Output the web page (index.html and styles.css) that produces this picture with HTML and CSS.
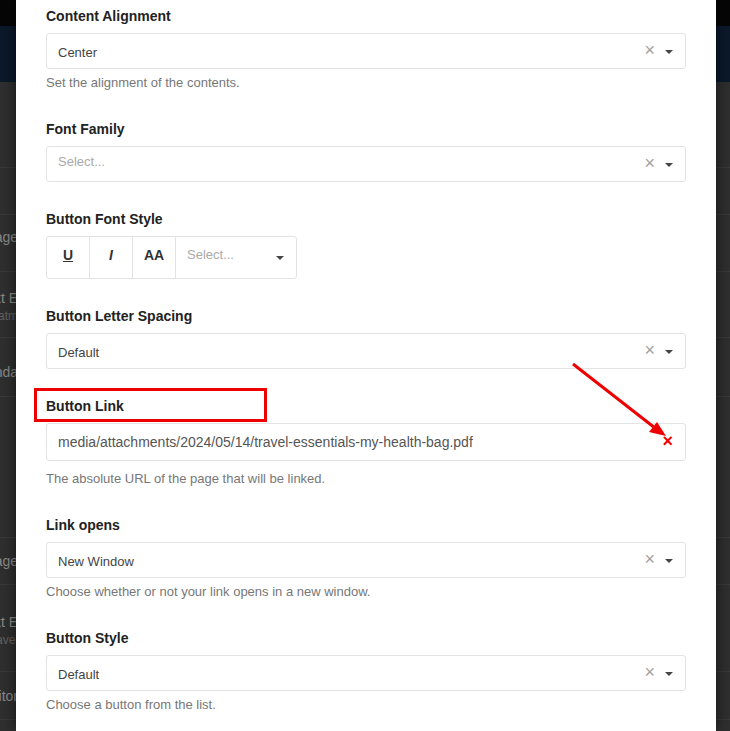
FILE: index.html
```html
<!DOCTYPE html>
<html lang="en">
<head>
  <meta charset="UTF-8" />
  <meta name="viewport" content="width=device-width, initial-scale=1.0"/>
  <title>Button Settings</title>
  <link rel="stylesheet" href="styles.css">
</head>
<body>
  <div class="page">
    <div class="topbar"></div>
    <div class="navbar"></div>
    <div class="rows">
      <div class="row r1"></div>
      <div class="row r2"></div>
      <div class="row r3"><span class="frag">Image</span></div>
      <div class="row r4"><span class="frag">Text E</span><span class="frag sub">Treatm</span></div>
      <div class="row r5"><span class="frag">Agenda</span></div>
      <div class="row r6"></div>
      <div class="row r7"><span class="frag">Image</span></div>
      <div class="row r8"><span class="frag">Text E</span><span class="frag sub">Travel</span></div>
      <div class="row r9"><span class="frag">Editor</span></div>
      <div class="row r10"></div>
    </div>
  </div>

  <div class="modal">
    <div class="field">
      <label>Content Alignment</label>
      <div class="select">
        <span class="value">Center</span>
        <span class="clear">&times;</span>
        <span class="caret"></span>
      </div>
      <p class="help">Set the alignment of the contents.</p>
    </div>

    <div class="field">
      <label>Font Family</label>
      <div class="select">
        <span class="value placeholder">Select...</span>
        <span class="clear">&times;</span>
        <span class="caret"></span>
      </div>
    </div>

    <div class="field">
      <label>Button Font Style</label>
      <div class="btn-group">
        <span class="style-btn under">U</span>
        <span class="style-btn ital">I</span>
        <span class="style-btn">AA</span>
        <div class="group-select">
          <span class="value placeholder">Select...</span>
          <span class="caret"></span>
        </div>
      </div>
    </div>

    <div class="field">
      <label>Button Letter Spacing</label>
      <div class="select">
        <span class="value">Default</span>
        <span class="clear">&times;</span>
        <span class="caret"></span>
      </div>
    </div>

    <div class="field link-field">
      <label>Button Link</label>
      <div class="highlight"></div>
      <div class="text-input">
        <span class="value">media/attachments/2024/05/14/travel-essentials-my-health-bag.pdf</span>
        <span class="clear red">&times;</span>
      </div>
      <p class="help">The absolute URL of the page that will be linked.</p>
      <svg class="arrow" width="110" height="90" viewBox="0 0 110 90">
        <line x1="4" y1="4" x2="86" y2="68" stroke="#ee0000" stroke-width="3"/>
        <polygon points="97,76 80,72 88,62" fill="#ee0000"/>
      </svg>
    </div>

    <div class="field">
      <label>Link opens</label>
      <div class="select">
        <span class="value">New Window</span>
        <span class="clear">&times;</span>
        <span class="caret"></span>
      </div>
      <p class="help">Choose whether or not your link opens in a new window.</p>
    </div>

    <div class="field">
      <label>Button Style</label>
      <div class="select">
        <span class="value">Default</span>
        <span class="clear">&times;</span>
        <span class="caret"></span>
      </div>
      <p class="help">Choose a button from the list.</p>
    </div>
  </div>
</body>
</html>
```

FILE: styles.css
```css
html, body {
  margin: 0;
  height: 100%;
  overflow: hidden;
}
body {
  background-color: #2f2f2f;
  font-family: "Liberation Sans", Arial, sans-serif;
  position: relative;
}

/* dimmed page behind the modal */
.topbar {
  height: 26px;
  background: #060606;
}
.navbar {
  height: 56px;
  background: #0b192b;
}
.rows {
  background: #2f2f2f;
}
.row {
  border-bottom: 1px solid #3a3a3a;
  box-sizing: border-box;
  display: flex;
  flex-direction: column;
  align-items: flex-start;
  justify-content: center;
  overflow: hidden;
  white-space: nowrap;
}
.frag {
  display: block;
  width: 18px;
  direction: rtl;
  text-align: left;
  overflow: hidden;
  font-size: 14px;
  color: #8a8a8a;
  line-height: 18px;
}
.frag.sub {
  font-size: 12px;
  color: #626262;
}
.r1 { height: 86px; }
.r2 { height: 47px; }
.r3 { height: 57px; padding-bottom: 12px; }
.r4 { height: 66px; padding-top: 4px; }
.r5 { height: 59px; padding-top: 10px; }
.r6 { height: 141px; }
.r7 { height: 47px; }
.r8 { height: 87px; padding-top: 6px; }
.r9 { height: 48px; }
.r10 { height: 60px; }

/* modal */
.modal {
  position: absolute;
  top: 0;
  left: 16px;
  width: 700px;
  bottom: 0;
  box-sizing: border-box;
  background: #fff;
  padding: 6px 30px 0;
  box-shadow: 0 0 14px rgba(0, 0, 0, 0.6);
}
.field {
  margin-bottom: 27px;
  position: relative;
}
.field label {
  display: block;
  font-size: 14px;
  font-weight: bold;
  color: #222;
  line-height: 20px;
  margin-bottom: 7px;
}
.select, .text-input {
  display: flex;
  align-items: center;
  height: 36px;
  box-sizing: border-box;
  border: 1px solid #e3e3e3;
  border-radius: 3px;
  padding: 2px 12px 0 11px;
}
.text-input {
  height: 38px;
  padding-top: 0;
}
.value {
  flex: 1;
  font-size: 13px;
  color: #444;
}
.text-input .value {
  font-size: 14px;
  color: #555;
}
.placeholder {
  color: #aaa;
  padding-bottom: 7px;
}
.clear {
  font-size: 18px;
  line-height: 18px;
  color: #a0a0a0;
  margin-right: 10px;
  padding-bottom: 5px;
}
.clear.red {
  color: #ee0000;
  font-weight: bold;
  margin-right: 0;
  padding-bottom: 3px;
}
.caret {
  width: 0;
  height: 0;
  border-left: 4px solid transparent;
  border-right: 4px solid transparent;
  border-top: 4px solid #444;
}
.help {
  margin: 5px 0 0;
  font-size: 13px;
  line-height: 18px;
  color: #777;
}
.link-field .help {
  margin-top: 9px;
}

/* font style group */
.btn-group {
  display: flex;
  width: 251px;
  height: 43px;
  border: 1px solid #e3e3e3;
  border-radius: 3px;
  box-sizing: border-box;
}
.style-btn {
  width: 43px;
  box-sizing: border-box;
  border-right: 1px solid #e3e3e3;
  display: flex;
  align-items: center;
  justify-content: center;
  padding-bottom: 5px;
  font-size: 14px;
  font-weight: bold;
  color: #333;
}
.style-btn.under {
  text-decoration: underline;
}
.style-btn.ital {
  font-style: italic;
}
.group-select {
  flex: 1;
  display: flex;
  align-items: center;
  padding: 0 12px 0 11px;
}

/* annotation */
.highlight {
  position: absolute;
  top: -8px;
  left: -12px;
  width: 233px;
  height: 34px;
  box-sizing: border-box;
  border: 3px solid #ee0000;
}
.arrow {
  position: absolute;
  top: -36px;
  left: 523px;
}
```
